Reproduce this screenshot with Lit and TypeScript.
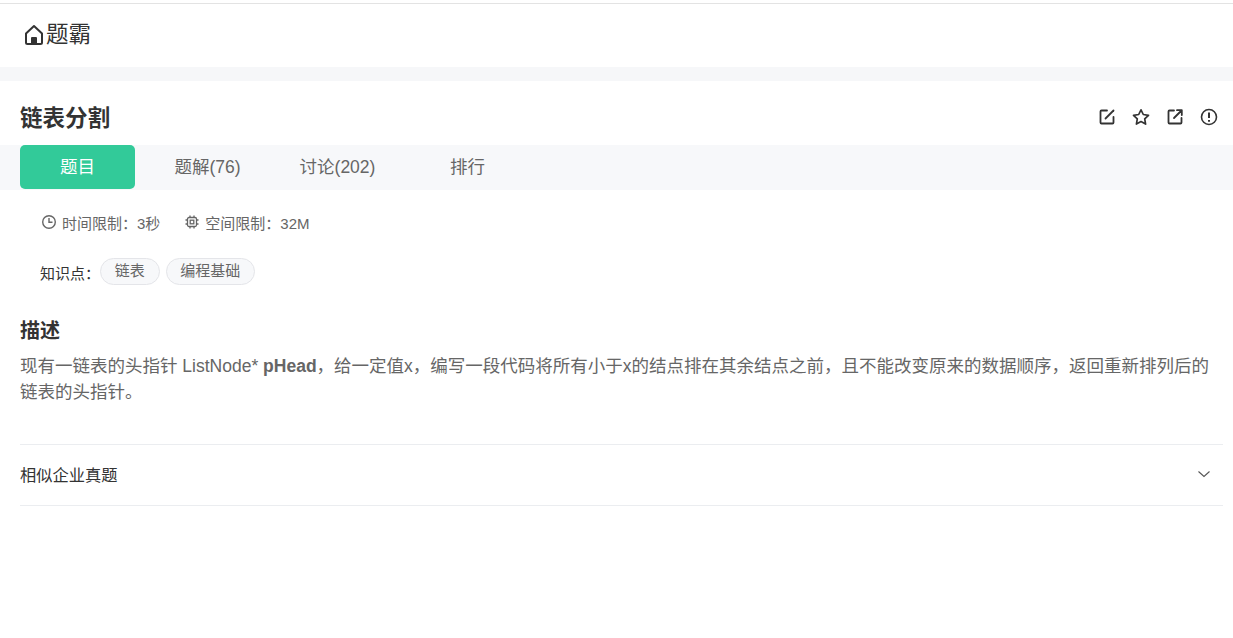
import { LitElement, html, css } from "lit";
import { customElement } from "lit/decorators.js";

@customElement("app-root")
export class AppRoot extends LitElement {
  static styles = css`
    :host {
      display: block;
      height: 638px;
      background: #fff;
      overflow: hidden;
      font-family: "Liberation Sans", "Noto Sans CJK SC", sans-serif;
      color: #333;
    }
    .topline { height: 3px; }
    .topline-border { height: 1px; background: #e3e3e3; }
    .header {
      height: 63px;
      display: flex;
      align-items: center;
      padding: 0 0 8px 24px;
      box-sizing: border-box;
      gap: 2px;
      font-size: 22.5px;
      color: #333;
    }
    .home { width: 20px; height: 22px; display: block; margin-top: 7px; }
    .band { height: 14px; background: #f6f7f9; }
    .title-row {
      height: 64px;
      display: flex;
      align-items: center;
      justify-content: space-between;
      padding: 10px 14.5px 0 20px;
      box-sizing: border-box;
    }
    h1 { margin: 2px 0 0; font-size: 22.5px; font-weight: 700; color: #333; line-height: 30px; }
    .tools { display: flex; gap: 14px; margin-top: -2px; }
    .tools svg { width: 20px; height: 20px; display: block; }
    .tabs {
      height: 45px;
      background: #f7f8fa;
      display: flex;
      padding-left: 20px;
      font-size: 17.5px;
      color: #666;
    }
    .tab {
      height: 44px;
      box-sizing: border-box;
      padding-bottom: 3px;
      display: flex;
      align-items: center;
      justify-content: center;
      border-radius: 5px;
      white-space: nowrap;
    }
    .tab.active { width: 115px; background: #32ca99; color: #fff; }
    .t1 { width: 145px; }
    .t2 { width: 115px; }
    .t3 { width: 145px; }
    .limits {
      display: flex;
      align-items: center;
      padding: 25px 0 0 40px;
      font-size: 15px;
      line-height: 18px;
      color: #666;
    }
    .limit { display: flex; align-items: center; gap: 4px; margin-right: 23px; }
    .limit svg { width: 18px; height: 18px; display: block; margin-top: -4px; }
    .knowledge {
      display: flex;
      align-items: center;
      padding: 25px 0 0 40px;
      font-size: 15px;
      color: #333;
    }
    .kl { margin-top: 1px; }
    .tag {
      height: 27px;
      line-height: 24px;
      box-sizing: border-box;
      padding: 0 13.75px;
      border: 1px solid #e4e5e9;
      background: #f7f8fa;
      border-radius: 14px;
      font-size: 15px;
      color: #666;
      margin-right: 6px;
    }
    h2 { margin: 32px 0 0 20px; font-size: 20px; line-height: 28px; font-weight: 700; color: #333; }
    .desc {
      margin: 8px 10px 0 20px;
      font-size: 17.5px;
      line-height: 26px;
      color: #666;
    }
    .desc b { font-weight: 700; }
    .similar {
      margin: 39px 10px 0 20px;
      height: 62px;
      box-sizing: border-box;
      padding-bottom: 2px;
      border-top: 1px solid #ebedf0;
      border-bottom: 1px solid #ebedf0;
      display: flex;
      align-items: center;
      justify-content: space-between;
      font-size: 16.25px;
      color: #333;
    }
    .chev { width: 16px; height: 16px; display: block; margin-right: 11px; margin-top: -1px; }
  `;

  render() {
    return html`
      <div class="topline"></div>
      <div class="topline-border"></div>
      <div class="header">
        <svg class="home" viewBox="0 0 20 22" fill="none" stroke="#333" stroke-width="2" stroke-linejoin="round">
          <path d="M2 9.500 10 2l8 7.500V18.500a1.500 1.500 0 0 1-1.500 1.500h-13A1.500 1.500 0 0 1 2 18.500z"/>
          <path d="M8 20v-6h4v6z" fill="#333"/>
        </svg>
        <span>题霸</span>
      </div>
      <div class="band"></div>
      <div class="title-row">
        <h1>链表分割</h1>
        <div class="tools">
          <svg viewBox="0 0 20 20" fill="none" stroke="#333" stroke-width="1.8" stroke-linecap="round" stroke-linejoin="round">
            <path d="M10 3.5H4.5a1 1 0 0 0-1 1v11a1 1 0 0 0 1 1h11a1 1 0 0 0 1-1V10"/>
            <path d="M8.5 11.5 16.5 3.5"/>
          </svg>
          <svg viewBox="0 0 20 20" fill="none" stroke="#333" stroke-width="1.7" stroke-linejoin="round">
            <path d="M10 2.8 12.3 7.5l5.2.8-3.8 3.6.9 5.2-4.6-2.5-4.6 2.5.9-5.2L2.5 8.3l5.2-.8z"/>
          </svg>
          <svg viewBox="0 0 20 20" fill="none" stroke="#333" stroke-width="1.8" stroke-linecap="round" stroke-linejoin="round">
            <path d="M9 3.5H4.5a1 1 0 0 0-1 1v11a1 1 0 0 0 1 1h11a1 1 0 0 0 1-1V11"/>
            <path d="M9 11 16.5 3.5M12 3.2h4.800V8"/>
          </svg>
          <svg viewBox="0 0 20 20" fill="none" stroke="#333" stroke-width="1.6">
            <circle cx="10" cy="10" r="7.5"/>
            <path d="M10 5.5V11" stroke-width="2"/>
            <path d="M10 13v1.800" stroke-width="2"/>
          </svg>
        </div>
      </div>
      <div class="tabs">
        <div class="tab active">题目</div>
        <div class="tab t1">题解(76)</div>
        <div class="tab t2">讨论(202)</div>
        <div class="tab t3">排行</div>
      </div>
      <div class="limits">
        <div class="limit">
          <svg viewBox="0 0 18 18" fill="none" stroke="#666" stroke-width="1.4">
            <circle cx="9" cy="9" r="6.3"/>
            <path d="M9 5v4.300h3.500"/>
          </svg>
          <span>时间限制：3秒</span>
        </div>
        <div class="limit">
          <svg viewBox="0 0 18 18" fill="none" stroke="#666" stroke-width="1.3">
            <rect x="4.500" y="4.500" width="9" height="9" rx="1.500"/>
            <rect x="7.200" y="7.200" width="3.600" height="3.600"/>
            <path d="M7 2.500v2M11 2.500v2M7 13.500v2M11 13.500v2M2.500 7h2M2.500 11h2M13.500 7h2M13.500 11h2"/>
          </svg>
          <span>空间限制：32M</span>
        </div>
      </div>
      <div class="knowledge">
        <span class="kl">知识点：</span>
        <span class="tag">链表</span>
        <span class="tag">编程基础</span>
      </div>
      <h2>描述</h2>
      <div class="desc">现有一链表的头指针 ListNode* <b>pHead</b>，给一定值x，编写一段代码将所有小于x的结点排在其余结点之前，且不能改变原来的数据顺序，返回重新排列后的链表的头指针。</div>
      <div class="similar">
        <span>相似企业真题</span>
        <svg class="chev" viewBox="0 0 16 16" fill="none" stroke="#555" stroke-width="1.1"><path d="M2.500 5.500 8 10.500l5.500-5"/></svg>
      </div>
    `;
  }
}
